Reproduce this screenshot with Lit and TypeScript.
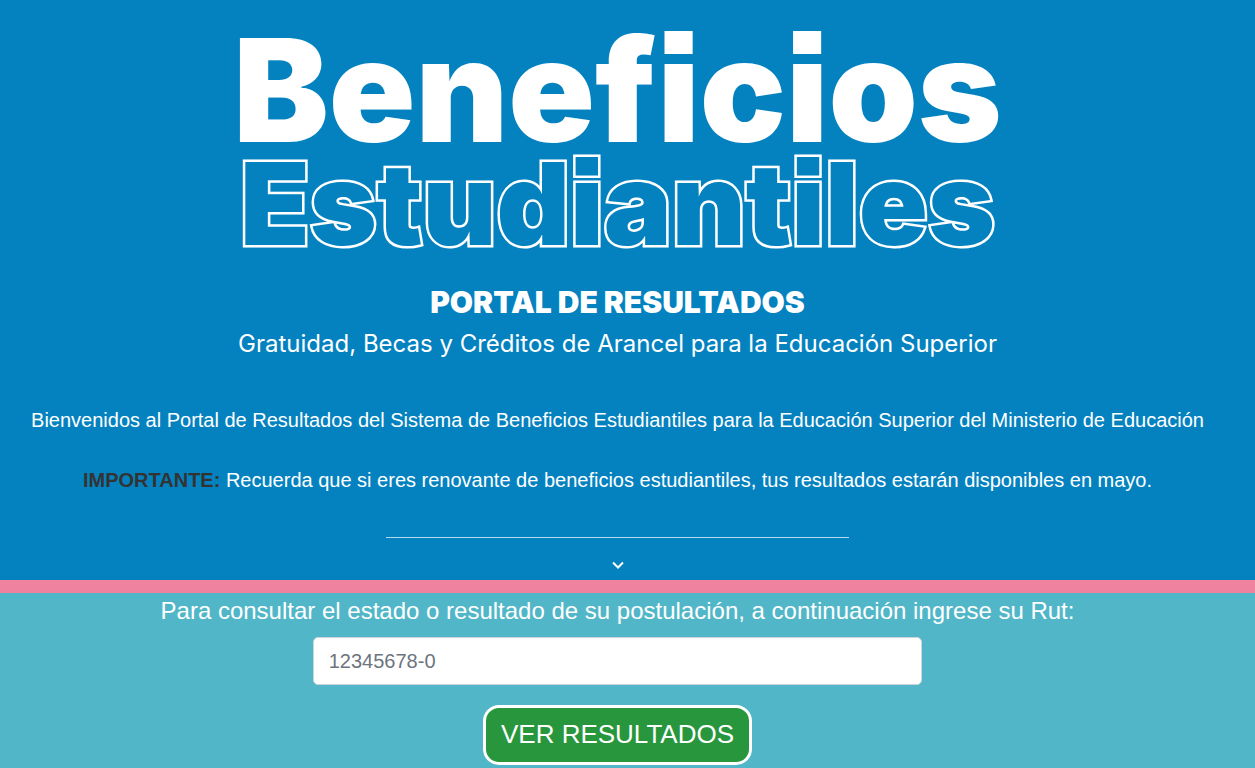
import { LitElement, html, css } from "lit";
import { customElement } from "lit/decorators.js";

@customElement("app-root")
export class AppRoot extends LitElement {
  static styles = css`
    :host {
      display: flex;
      flex-direction: column;
      min-height: 100vh;
      color: #fff;
      font-family: "Liberation Sans", Arial, sans-serif;
      text-align: center;
    }
    * {
      box-sizing: border-box;
    }
    h1, h2, p {
      margin: 0;
    }
    .hero {
      display: flex;
      flex-direction: column;
      align-items: center;
      padding: 20px 20px 8px 0;
      background: #0482bf;
    }
    .logo {
      display: flex;
      flex-direction: column;
      align-items: center;
      font-family: Inter, "Open Sans", sans-serif;
      font-feature-settings: "ss07" 1, "ss08" 1;
      font-weight: 900;
      white-space: nowrap;
    }
    .solid {
      font-size: 143px;
      line-height: 140px;
    }
    .outline {
      font-size: 114px;
      line-height: 88px;
      color: #0482bf;
      -webkit-text-stroke: 5px #fff;
      paint-order: stroke fill;
    }
    .title {
      margin-top: 36px;
      font-family: Inter, sans-serif;
      font-size: 30px;
      line-height: 36px;
      font-weight: 900;
    }
    .subtitle {
      margin-top: 8px;
      font-family: Inter, sans-serif;
      font-size: 24px;
      line-height: 32px;
      font-weight: 400;
    }
    .text {
      margin-top: 44px;
      font-size: 20px;
      line-height: 32px;
    }
    .text + .text {
      margin-top: 28px;
    }
    .text strong {
      color: #333;
    }
    .rule {
      width: 37.5%;
      height: 1px;
      margin: 41px 0 20px;
      border: 0;
      background: #b4daec;
    }
    .chevron {
      display: block;
      width: 14px;
      height: 14px;
    }
    .query {
      flex: 1;
      display: flex;
      flex-direction: column;
      align-items: center;
      padding: 0 20px 3px 0;
      border-top: 13px solid #ef829f;
      background: #51b7c8;
    }
    .label {
      font-size: 24px;
      line-height: 36px;
    }
    .rut {
      width: calc(50% - 8px);
      height: 48px;
      margin: 8px 0 20px;
      padding: 0 15px;
      border: 1px solid #ced4da;
      border-radius: 5px;
      background: #fff;
      color: #495057;
      font: inherit;
      font-size: 20px;
    }
    .rut::placeholder {
      color: #6c757d;
      opacity: 1;
    }
    .submit {
      height: 60px;
      padding: 0 15px 2px;
      border: 3px solid #fff;
      border-radius: 16px;
      background: #28963c;
      color: #fff;
      font: inherit;
      font-size: 26px;
      cursor: pointer;
    }
  `;

  render() {
    return html`
      <header class="hero">
        <h1 class="logo">
          <span class="solid">Beneficios</span>
          <span class="outline">Estudiantiles</span>
        </h1>
        <h2 class="title">PORTAL DE RESULTADOS</h2>
        <p class="subtitle">Gratuidad, Becas y Créditos de Arancel para la Educación Superior</p>
        <p class="text">Bienvenidos al Portal de Resultados del Sistema de Beneficios Estudiantiles para la Educación Superior del Ministerio de Educación</p>
        <p class="text"><strong>IMPORTANTE:</strong> Recuerda que si eres renovante de beneficios estudiantiles, tus resultados estarán disponibles en mayo.</p>
        <hr class="rule" />
        <svg class="chevron" viewBox="0 0 14 14" aria-hidden="true">
          <path d="M2 4.5 7 9.5 12 4.5" fill="none" stroke="#fff" stroke-width="2" />
        </svg>
      </header>
      <form class="query" @submit=${(e: Event) => e.preventDefault()}>
        <label class="label" for="rut">Para consultar el estado o resultado de su postulación, a continuación ingrese su Rut:</label>
        <input class="rut" id="rut" type="text" placeholder="12345678-0" />
        <button class="submit" type="submit">VER RESULTADOS</button>
      </form>
    `;
  }
}
